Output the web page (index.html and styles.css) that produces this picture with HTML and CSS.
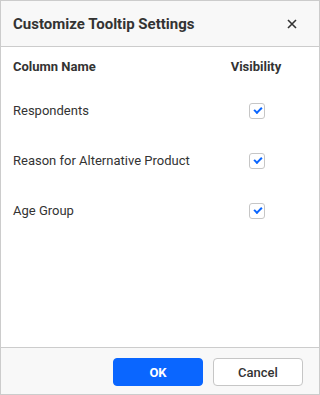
FILE: index.html
```html
<!DOCTYPE html>
<html lang="en">
<head>
  <meta charset="UTF-8" />
  <title>Customize Tooltip Settings</title>
  <meta name="viewport" content="width=device-width, initial-scale=1.0" />
  <link rel="stylesheet" href="styles.css">
</head>
<body>
  <div class="dialog">
    <div class="dialog-header">
      <h1>Customize Tooltip Settings</h1>
      <button class="close-btn" aria-label="Close">
        <svg width="10" height="10" viewBox="0 0 10 10">
          <path d="M1 1 L9 9 M9 1 L1 9" stroke="#333" stroke-width="1.6" fill="none" />
        </svg>
      </button>
    </div>

    <div class="dialog-content">
      <div class="grid-row grid-head">
        <div>Column Name</div>
        <div class="col-vis">Visibility</div>
      </div>
      <div class="grid-row">
        <div>Respondents</div>
        <div class="col-vis"><span class="check"></span></div>
      </div>
      <div class="grid-row">
        <div>Reason for Alternative Product</div>
        <div class="col-vis"><span class="check"></span></div>
      </div>
      <div class="grid-row">
        <div>Age Group</div>
        <div class="col-vis"><span class="check"></span></div>
      </div>
    </div>

    <div class="dialog-footer">
      <button class="btn btn-primary">OK</button>
      <button class="btn btn-default">Cancel</button>
    </div>
  </div>
</body>
</html>
```

FILE: styles.css
```css
* {
  box-sizing: border-box;
}

body {
  margin: 0;
  font-family: Roboto, "Liberation Sans", sans-serif;
  color: #333;
  background: #fff;
}

.dialog {
  width: 320px;
  height: 395px;
  border: 1px solid #ccc;
  display: flex;
  flex-direction: column;
  background: #fff;
}

.dialog-header {
  height: 46px;
  background: #f8f8f8;
  border-bottom: 1px solid #ccc;
  display: flex;
  align-items: center;
  justify-content: space-between;
  padding: 0 22px 0 12px;
}

.dialog-header h1 {
  margin: 0;
  font-size: 15px;
  font-weight: 700;
  color: #333;
}

.close-btn {
  background: none;
  border: none;
  padding: 0;
  width: 10px;
  height: 10px;
  display: flex;
  cursor: pointer;
}

.dialog-content {
  flex: 1;
  padding: 0 28px 0 12px;
  font-size: 13px;
}

.grid-row {
  display: grid;
  grid-template-columns: 1fr 70px;
  align-items: center;
  height: 50px;
}

.grid-head {
  height: 38px;
  font-weight: 700;
  font-size: 13px;
}

.col-vis {
  text-align: center;
  display: flex;
  justify-content: center;
}

.check {
  width: 16px;
  height: 16px;
  border: 1px solid #c6c6c6;
  border-radius: 3px;
  background: #fff;
  position: relative;
  margin-top: 2px;
  margin-left: 2px;
}

.check::after {
  content: "";
  position: absolute;
  left: 4px;
  top: 3px;
  width: 6px;
  height: 3px;
  border-left: 2px solid #0a66ff;
  border-bottom: 2px solid #0a66ff;
  transform: rotate(-45deg);
}

.dialog-footer {
  height: 47px;
  background: #f8f8f8;
  border-top: 1px solid #ccc;
  display: flex;
  justify-content: flex-end;
  align-items: flex-start;
  gap: 10px;
  padding: 10px 16px 0 0;
}

.btn {
  width: 90px;
  height: 28px;
  border-radius: 4px;
  font-family: Roboto, "Liberation Sans", sans-serif;
  font-size: 13px;
  cursor: pointer;
}

.btn-primary {
  background: #0a66ff;
  border: 1px solid #0a66ff;
  color: #fff;
  font-weight: 700;
}

.btn-default {
  background: #fff;
  border: 1px solid #c6c6c6;
  color: #333;
  font-weight: 500;
}
```
